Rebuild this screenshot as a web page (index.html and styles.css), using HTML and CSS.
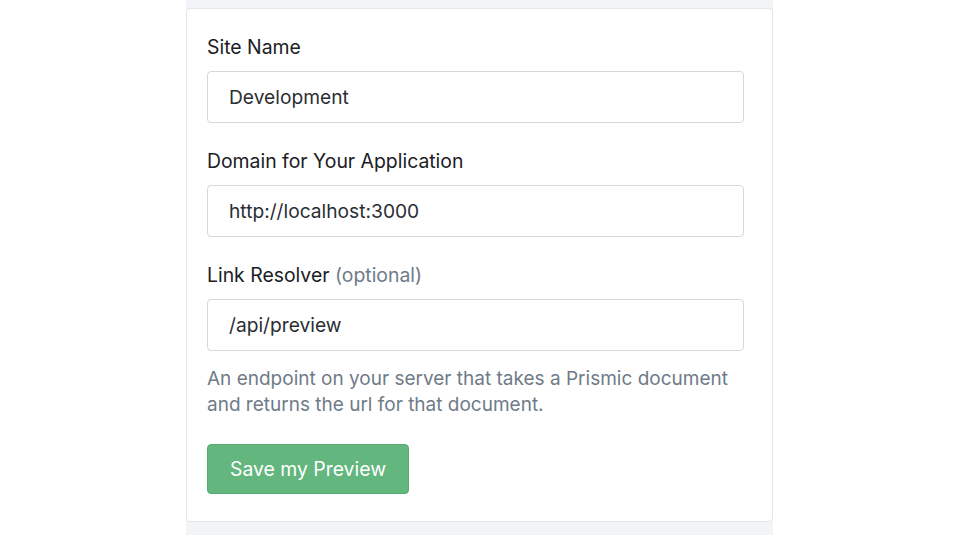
FILE: index.html
```html
<!DOCTYPE html>
<html>
<head>
<meta charset="utf-8">
<link rel="stylesheet" href="styles.css">
</head>
<body>
<div class="column">
  <form class="card">
    <div class="field">
      <label class="label">Site Name</label>
      <div class="input">Development</div>
    </div>
    <div class="field">
      <label class="label">Domain for Your Application</label>
      <div class="input">http://localhost:3000</div>
    </div>
    <div class="field">
      <label class="label">Link Resolver <span class="opt">(optional)</span></label>
      <div class="input">/api/preview</div>
      <p class="help">An endpoint on your server that takes a Prismic document<br>and returns the url for that document.</p>
    </div>
    <div class="actions">
      <button type="button" class="btn">Save my Preview</button>
    </div>
  </form>
</div>
</body>
</html>
```

FILE: styles.css
```css
html, body {
  margin: 0;
  padding: 0;
  background: #ffffff;
  font-family: Inter, "Liberation Sans", sans-serif;
}
.column {
  margin-left: 186px;
  width: 587px;
  height: 535px;
  background: #f3f4f7;
  padding-top: 8px;
  box-sizing: border-box;
}
.card {
  background: #ffffff;
  border: 1px solid #e4e6ea;
  border-radius: 4px;
  padding: 25px 28px 27px 20px;
  display: flex;
  flex-direction: column;
  gap: 25px;
  box-sizing: border-box;
}
.field {
  display: flex;
  flex-direction: column;
}
.label {
  font-size: 19.4px;
  line-height: 26px;
  color: #1b2024;
  margin-bottom: 11px;
}
.opt {
  color: #6f7b88;
}
.input {
  height: 52px;
  box-sizing: border-box;
  border: 1px solid #d3d8dd;
  border-radius: 4px;
  padding: 0 21px;
  display: flex;
  align-items: center;
  font-size: 19.2px;
  color: #2a2e33;
}
.help {
  margin: 15px 0 0;
  font-size: 19px;
  line-height: 26px;
  color: #6f7b88;
}
.actions {
  display: flex;
  padding-top: 1px;
}
.btn {
  height: 50px;
  width: 202px;
  border: 1px solid #58ad74;
  border-radius: 4px;
  background: #62b67e;
  color: #ffffff;
  font-family: Inter, "Liberation Sans", sans-serif;
  font-size: 19.4px;
  padding: 0;
}
```
